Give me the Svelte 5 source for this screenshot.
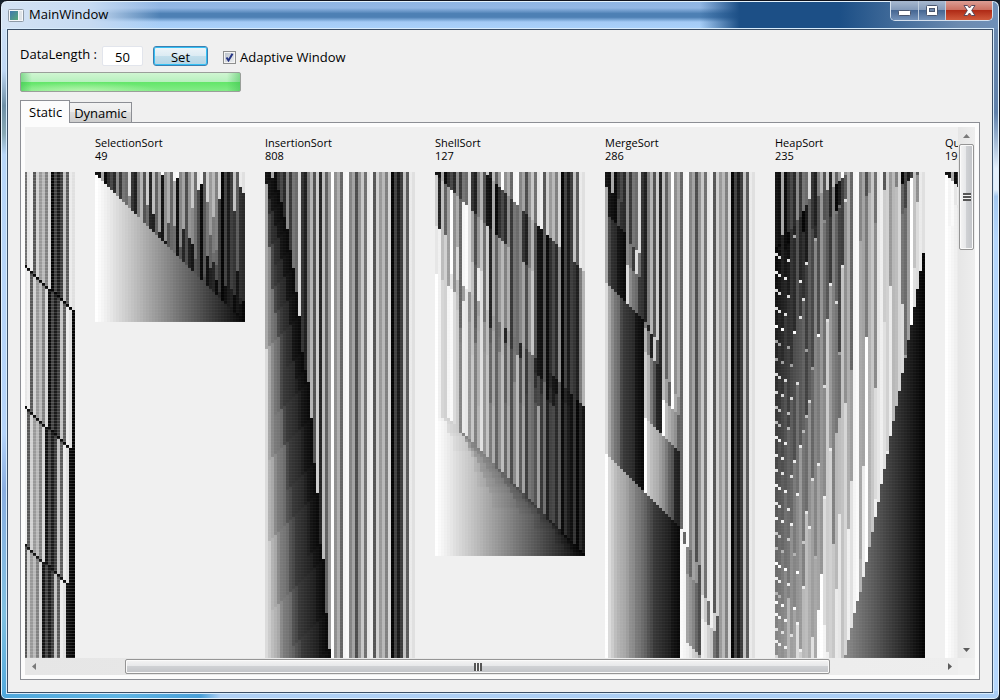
<script>
  import { onMount } from 'svelte';

  const CELL = 3;
  // Shade index per item: 0 is the lightest, 49 the darkest.
  const source = [
    46, 47, 17, 48, 41, 36, 42, 23, 39, 27, 29, 7, 40, 44, 26, 15, 34, 10, 43, 13,
    31, 19, 0, 22, 16, 30, 2, 1, 24, 18, 35, 21, 11, 28, 5, 3, 33, 9, 20, 14,
    25, 8, 49, 37, 45, 38, 12, 32, 4, 6
  ];

  function record(sort) {
    const a = [...source];
    const rows = [[...a]];
    const snap = () => rows.push([...a]);
    const swap = (i, j) => {
      [a[i], a[j]] = [a[j], a[i]];
      snap();
    };
    sort(a, swap, snap);
    return rows;
  }

  function bubble(a, swap) {
    for (let end = a.length - 1; end > 0; end--)
      for (let j = 0; j < end; j++) if (a[j] > a[j + 1]) swap(j, j + 1);
  }

  function selection(a, swap) {
    for (let i = 0; i < a.length - 1; i++) {
      let min = i;
      for (let j = i + 1; j < a.length; j++) if (a[j] < a[min]) min = j;
      swap(i, min);
    }
  }

  function insertion(a, swap, snap) {
    for (let i = 1; i < a.length; i++) {
      const key = a[i];
      let j = i - 1;
      for (; j >= 0 && a[j] > key; j--) {
        a[j + 1] = a[j];
        snap();
      }
      a[j + 1] = key;
      snap();
    }
  }

  function shell(a, swap, snap) {
    for (const gap of [17, 5, 1])
      for (let i = gap; i < a.length; i++) {
        const key = a[i];
        let j = i - gap;
        for (; j >= 0 && a[j] > key; j -= gap) a[j + gap] = a[j];
        a[j + gap] = key;
        snap();
      }
  }

  function merge(a, swap, snap) {
    const run = (lo, hi) => {
      if (lo >= hi) return;
      const mid = (lo + hi) >> 1;
      run(lo, mid);
      run(mid + 1, hi);
      const sorted = a.slice(lo, hi + 1).sort((x, y) => x - y);
      sorted.forEach((value, k) => {
        a[lo + k] = value;
        snap();
      });
    };
    run(0, a.length - 1);
  }

  function heap(a, swap) {
    const sift = (root, size) => {
      for (;;) {
        let top = root;
        for (const child of [2 * root + 1, 2 * root + 2])
          if (child < size && a[child] > a[top]) top = child;
        if (top === root) return;
        swap(root, top);
        root = top;
      }
    };
    for (let i = (a.length >> 1) - 1; i >= 0; i--) sift(i, a.length);
    for (let end = a.length - 1; end > 0; end--) {
      swap(0, end);
      sift(0, end);
    }
  }

  function quick(a, swap) {
    const run = (lo, hi) => {
      if (lo >= hi) return;
      let p = lo;
      for (let j = lo; j < hi; j++) if (a[j] < a[hi]) swap(p++, j);
      swap(p, hi);
      run(lo, p - 1);
      run(p + 1, hi);
    };
    run(0, a.length - 1);
  }

  const charts = [
    { name: 'BubbleSort', rows: record(bubble), seam: 0.16 },
    { name: 'SelectionSort', rows: record(selection), seam: 0.04 },
    { name: 'InsertionSort', rows: record(insertion), seam: 0.04 },
    { name: 'ShellSort', rows: record(shell), seam: 0.04 },
    { name: 'MergeSort', rows: record(merge), seam: 0.04 },
    { name: 'HeapSort', rows: record(heap), seam: 0.04 },
    { name: 'QuickSort', rows: record(quick), seam: 0.04, steps: 193 }
  ];

  function paint(canvas, chart) {
    const ctx = canvas.getContext('2d');
    chart.rows.forEach((row, y) => {
      row.forEach((value, x) => {
        const g = Math.round(255 - value * 5.1);
        ctx.fillStyle = `rgb(${g},${g},${g})`;
        ctx.fillRect(x * CELL, y * CELL, CELL, CELL);
      });
      ctx.fillStyle = `rgba(240,240,240,${chart.seam})`;
      ctx.fillRect(0, y * CELL + CELL - 1, canvas.width, 1);
    });
  }

  let view;
  let dataLength = $state(50);
  let adaptive = $state(true);
  let tab = $state('Static');
  let bars = $state({ x: 0, w: 100, y: 0, h: 100 });

  function measure() {
    bars = {
      x: (view.scrollLeft / view.scrollWidth) * 100,
      w: (view.clientWidth / view.scrollWidth) * 100,
      y: (view.scrollTop / view.scrollHeight) * 100,
      h: (view.clientHeight / view.scrollHeight) * 100
    };
  }

  onMount(() => {
    view.scrollLeft = 110;
    measure();
  });
</script>

<svelte:window onresize={measure} />

<div class="window">
  <header class="titlebar">
    <svg class="appicon" viewBox="0 0 16 16" aria-hidden="true">
      <defs>
        <linearGradient id="pane" x1="0" y1="0" x2="1" y2="1">
          <stop offset="0" stop-color="#3f78b0" />
          <stop offset="1" stop-color="#59a878" />
        </linearGradient>
      </defs>
      <rect x="0.5" y="2.5" width="15" height="12" rx="1" fill="#f6f8fa" stroke="#8e9aa6" />
      <rect x="2" y="4" width="8" height="9" fill="url(#pane)" />
      <rect x="11" y="4" width="3" height="9" fill="#dfe4e8" />
    </svg>
    <span class="caption">MainWindow</span>
    <div class="sysbuttons">
      <button class="min" aria-label="Minimize">
        <svg width="13" height="6" viewBox="0 0 13 6"><rect x="0.5" y="0.5" width="12" height="5" rx="1" fill="#fff" stroke="#4a5770" /></svg>
      </button>
      <button class="max" aria-label="Maximize">
        <svg width="12" height="11" viewBox="0 0 12 11"><rect x="0.5" y="0.5" width="11" height="10" rx="1" fill="#fff" stroke="#4a5770" /><rect x="3.5" y="3.5" width="5" height="3" fill="#6f88ab" stroke="#4a5770" /></svg>
      </button>
      <button class="close" aria-label="Close">
        <svg width="13" height="11" viewBox="0 0 13 11"><path d="M1 .5H4.500L6.500 3 8.500.5H12L8.700 5.500 12 10.500H8.500L6.500 8 4.500 10.500H1L4.300 5.500Z" fill="#fff" stroke="#5a4a5c" /></svg>
      </button>
    </div>
  </header>

  <main>
    <div class="controls">
      <label class="name" for="length">DataLength :</label>
      <input id="length" class="length" type="text" bind:value={dataLength} />
      <button class="set">Set</button>
      <label class="adaptive"><input type="checkbox" bind:checked={adaptive} />Adaptive Window</label>
    </div>
    <div class="progress" role="progressbar" aria-label="Progress" aria-valuenow="100"></div>

    <div class="tabs" role="tablist">
      {#each ['Static', 'Dynamic'] as item}
        <button role="tab" aria-selected={tab === item} class:active={tab === item} onclick={() => (tab = item)}>{item}</button>
      {/each}
    </div>
    <section class="panel">
      <div class="view" bind:this={view} onscroll={measure}>
        <div class="charts">
          {#each charts as chart}
            <article>
              <h2>{chart.name}</h2>
              <p>{chart.steps ?? chart.rows.length - 1}</p>
              <canvas width={source.length * CELL} height={chart.rows.length * CELL} use:paint={chart}></canvas>
            </article>
          {/each}
        </div>
      </div>
      <div class="bar vertical">
        <button aria-label="Scroll up"><svg width="7" height="4" viewBox="0 0 7 4"><path d="M0 4 3.500 0 7 4Z" fill="#7a7a7a" /></svg></button>
        <div class="track"><div class="thumb" style:top="{bars.y}%" style:height="{bars.h}%"><i></i></div></div>
        <button aria-label="Scroll down"><svg width="7" height="4" viewBox="0 0 7 4"><path d="M0 0H7L3.500 4Z" fill="#5c5c5c" /></svg></button>
      </div>
      <div class="bar horizontal">
        <button aria-label="Scroll left"><svg width="4" height="7" viewBox="0 0 4 7"><path d="M4 0V7L0 3.500Z" fill="#7a7a7a" /></svg></button>
        <div class="track"><div class="thumb" style:left="{bars.x}%" style:width="{bars.w}%"><i></i></div></div>
        <button aria-label="Scroll right"><svg width="4" height="7" viewBox="0 0 4 7"><path d="M0 0 4 3.500 0 7Z" fill="#5c5c5c" /></svg></button>
      </div>
    </section>
  </main>
</div>

<style>
  :global(body) {
    margin: 0;
    background: #14202c;
  }
  .window,
  .window * {
    box-sizing: border-box;
  }
  .window {
    display: flex;
    flex-direction: column;
    height: 100vh;
    padding: 0 6px 6px;
    border: 1px solid #10131c;
    border-radius: 7px 7px 6px 6px;
    box-shadow: inset 0 0 0 1px #e4f2fc;
    font: 13px/18px "Open Sans", "Noto Sans", sans-serif;
    color: #000;
    background:
      linear-gradient(90deg, transparent 70%, #1c4f86 74%, #1c4f86 84%, #6c8bb0 96%, #6f90b8) 0 0 / 100% 28px no-repeat,
      linear-gradient(90deg, #d4e3f4 0, #c6daf2 9%, transparent 16%) 0 0 / 100% 28px no-repeat,
      linear-gradient(#8fb5e3 0, #92b7e4 25%, #4d80b4 45%, #4d80b4 58%, #a4cbf5 75%, #aad2fa 100%) 0 0 / 100% 28px no-repeat,
      linear-gradient(90deg, #50a8dc 0, #5fb5e4 12%, #4aa0d8 20%, #b0d0f4 22%, #a9cdf5 100%) 0 100% / 100% 8px no-repeat,
      linear-gradient(#6d8bb0 0, #5f80aa 16%, #e4f0fc 24%, #e4f0fc 27%, #a5c9f0 28%, #b5d6fb 34%, #b5d6fb 100%) 100% 0 / 8px 100% no-repeat,
      linear-gradient(#d4e4f6 0, #c0d8f4 10%, #6e8fa6 15%, #88a8b4 19%, #b8d6f8 22%, #b5d4fa 62%, #8aaee0 70%, #80c0e0 88%, #50a8dc 100%) 0 0 / 8px 100% no-repeat;
  }
  .titlebar {
    display: flex;
    flex: none;
    height: 28px;
    padding: 0 0 0 1px;
  }
  .appicon {
    width: 16px;
    height: 16px;
    margin-top: 6px;
  }
  .caption {
    margin: 4px auto 0 5px;
  }
  .sysbuttons {
    display: flex;
    height: 20px;
    border: 1px solid #d4e0ee;
    border-top: 0;
    border-radius: 0 0 5px 5px;
    overflow: hidden;
  }
  .sysbuttons button {
    display: flex;
    align-items: center;
    justify-content: center;
    width: 28px;
    padding: 0;
    border: 0;
    border-right: 1px solid #c0cede;
    background: linear-gradient(#a8b9cf, #8299b8 48%, #466793 50%, #7391b8);
  }
  .sysbuttons .min {
    padding-top: 4px;
  }
  .sysbuttons .max {
    width: 27px;
  }
  .sysbuttons .close {
    width: 46px;
    border-right: 0;
    background: linear-gradient(#dc9d94, #cb6f60 48%, #b02b17 50%, #d05a3c);
  }
  main {
    display: flex;
    flex: 1;
    flex-direction: column;
    align-items: flex-start;
    min-height: 0;
    padding: 16px 12px 12px;
    background: #f0f0f0;
    border: 1px solid #3c4f66;
    outline: 1px solid #d8ecfc;
  }
  .controls {
    display: flex;
    align-items: center;
    height: 20px;
  }
  .name {
    width: 82px;
    padding-bottom: 4px;
    white-space: nowrap;
  }
  .length {
    width: 41px;
    height: 20px;
    padding: 2px 0 0;
    border: 1px solid #e2e5ec;
    border-radius: 2px;
    background: #fff;
    font: inherit;
    text-align: center;
  }
  .set {
    width: 55px;
    height: 20px;
    margin: 0 15px 0 10px;
    padding: 1px 0 0;
    border: 1px solid #3c7fb1;
    border-radius: 3px;
    box-shadow: inset 0 0 0 1px #34c0f4;
    background: linear-gradient(#eef5f9, #dcebf3 49%, #c3dfec 50%, #b4d4e4);
    font: inherit;
  }
  .adaptive {
    display: flex;
    align-items: center;
    gap: 4px;
    padding-top: 2px;
    white-space: nowrap;
  }
  .adaptive input {
    appearance: none;
    width: 13px;
    height: 13px;
    margin: 0;
    border: 1px solid #8e8f8f;
    box-shadow: inset 0 0 0 1px #f4f4f4;
    background: linear-gradient(135deg, #b8bfc8, #f0f2f4);
  }
  .adaptive input:checked {
    background:
      url("data:image/svg+xml,%3Csvg xmlns='http://www.w3.org/2000/svg' viewBox='0 0 11 11'%3E%3Cpath d='M2.500 5.500 4.500 8.500 8.500 1.800' fill='none' stroke='%23253484' stroke-width='2'/%3E%3C/svg%3E"),
      linear-gradient(135deg, #b8bfc8, #f0f2f4);
  }
  .progress {
    width: 221px;
    height: 20px;
    margin-top: 6px;
    border: 1px solid #9a9f9a;
    border-radius: 2px;
    background:
      linear-gradient(90deg, rgba(60, 190, 80, 0.5), transparent 5%, transparent 94%, rgba(60, 190, 80, 0.5)),
      radial-gradient(ellipse at 28% 100%, rgba(215, 250, 200, 0.6), transparent 35%),
      linear-gradient(#d0f6d2, #b8f0be 48%, #64e66a 52%, #84ec88);
  }
  .tabs {
    display: flex;
    align-items: flex-end;
    height: 23px;
    margin-top: 8px;
  }
  .tabs button {
    height: 21px;
    padding: 0 4px;
    border: 1px solid #8c8e94;
    border-left: 0;
    background: linear-gradient(#f3f3f3, #ebebeb 49%, #dddddd 50%, #cdcdcd);
    font: inherit;
  }
  .tabs .active {
    z-index: 1;
    height: 23px;
    padding: 0 7px 1px 8px;
    border-left: 1px solid #8c8e94;
    border-bottom: 0;
    background: #fcfcfc;
  }
  .panel {
    display: grid;
    flex: 1;
    grid-template: minmax(0, 1fr) 17px / minmax(0, 1fr) 17px;
    align-self: stretch;
    min-height: 0;
    margin-top: -1px;
    padding: 4px;
    border: 1px solid #8c8e94;
    background: linear-gradient(#f0f0f0, #f0f0f0) content-box, #fcfcfc;
  }
  .view {
    overflow: auto;
    scrollbar-width: none;
  }
  .charts {
    display: flex;
    align-items: flex-start;
    width: max-content;
  }
  article {
    width: 170px;
    padding: 9px 10px 10px;
    font-size: 11px;
    line-height: 13px;
  }
  h2,
  p {
    margin: 0;
    font: inherit;
  }
  canvas {
    display: block;
    margin-top: 10px;
  }
  .bar {
    display: flex;
    background: linear-gradient(90deg, #e6e6e6, #eeeeee);
  }
  .bar button {
    display: flex;
    flex: none;
    align-items: center;
    justify-content: center;
    width: 17px;
    height: 17px;
    padding: 0;
    border: 0;
    background: none;
  }
  .vertical {
    flex-direction: column;
  }
  .track {
    position: relative;
    flex: 1;
  }
  .thumb {
    position: absolute;
    display: flex;
    align-items: center;
    justify-content: center;
    border: 1px solid #959595;
    border-radius: 2px;
    box-shadow: inset 0 0 0 1px #fafafa;
  }
  .vertical .thumb {
    left: 1px;
    right: 1px;
    background: linear-gradient(90deg, #f4f4f4, #e6e7e9 48%, #cfd1d4 50%, #c2c4c8);
  }
  .horizontal .thumb {
    top: 1px;
    bottom: 1px;
    background: linear-gradient(#f4f4f4, #e6e7e9 48%, #cfd1d4 50%, #c2c4c8);
  }
  .thumb i {
    width: 8px;
    height: 8px;
  }
  .vertical i {
    background: repeating-linear-gradient(#555 0 2px, #f4f4f4 2px 3px);
  }
  .horizontal i {
    background: repeating-linear-gradient(90deg, #555 0 2px, #f4f4f4 2px 3px);
  }
</style>
